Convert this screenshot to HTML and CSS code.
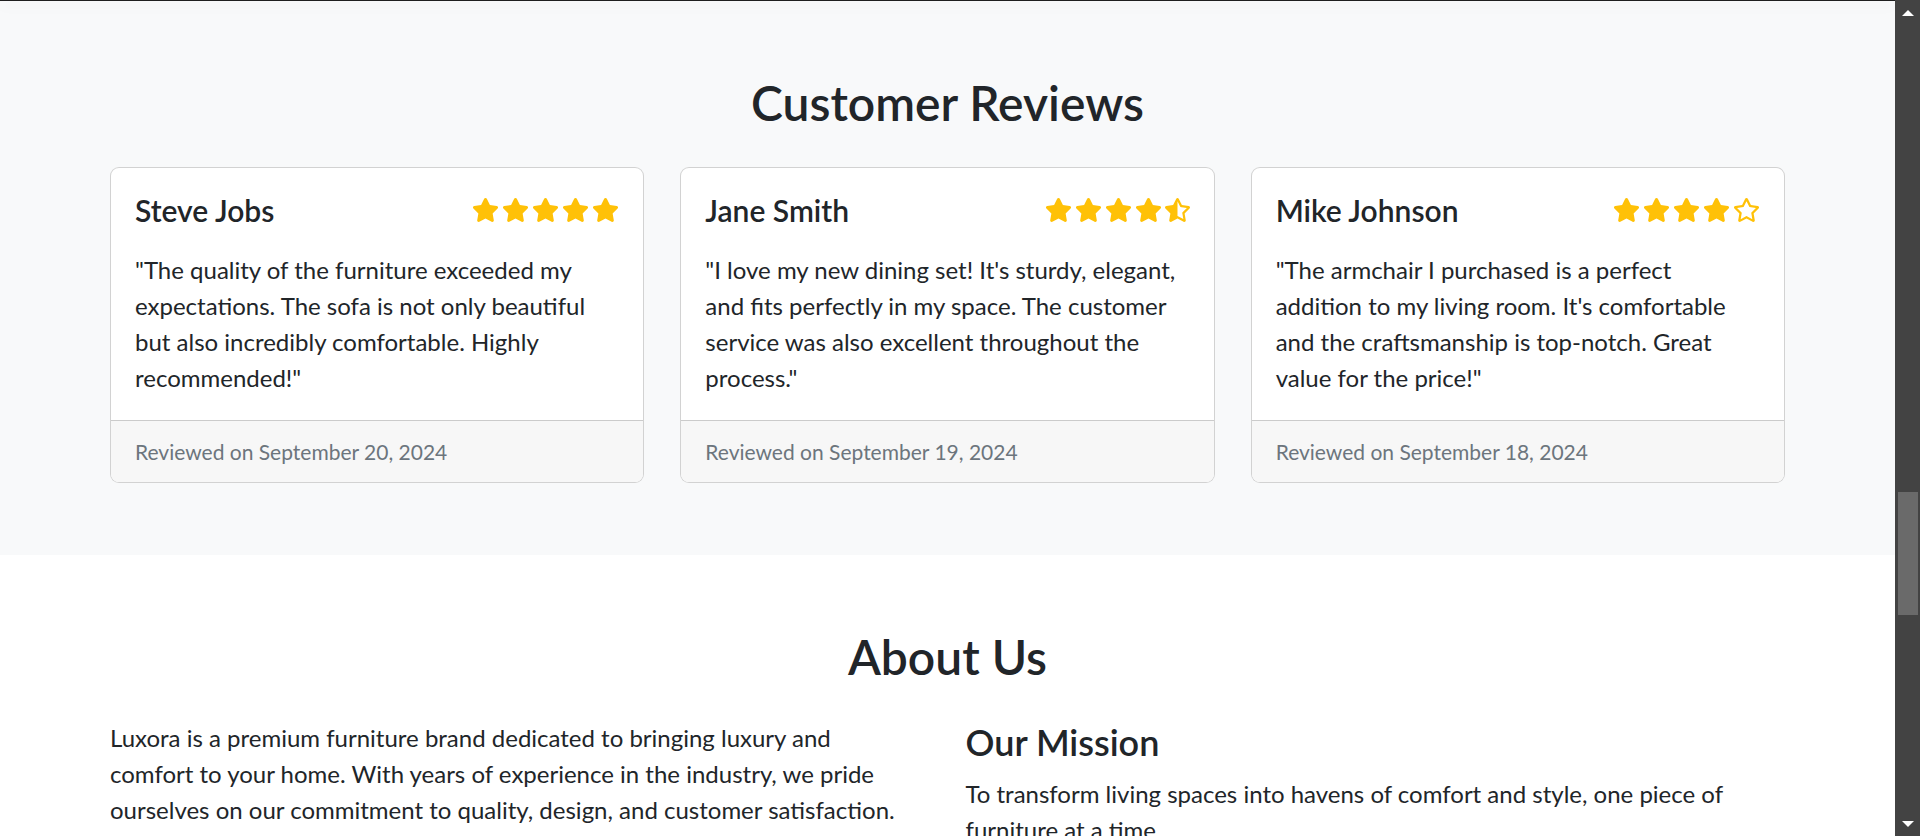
FILE: index.html
```html
<!DOCTYPE html>
<html lang="en">
<head>
<meta charset="utf-8">
<title>Luxora - Reviews</title>
<link rel="stylesheet" href="styles.css">
</head>
<body>
<svg class="defs" xmlns="http://www.w3.org/2000/svg" aria-hidden="true">
  <symbol id="s-full" viewBox="0 0 576 512"><path d="M259.3 17.8L194 150.2 47.9 171.5c-26.2 3.8-36.7 36.1-17.7 54.6l105.7 103-25 145.5c-4.5 26.3 23.2 46 46.4 33.7L288 439.6l130.7 68.7c23.2 12.2 50.9-7.4 46.4-33.7l-25-145.5 105.7-103c19-18.5 8.5-50.8-17.7-54.6L382 150.2 316.7 17.8c-11.7-23.6-45.6-23.9-57.4 0z"/></symbol>
  <symbol id="s-half" viewBox="0 0 536 512"><path d="M508.55 171.51L362.18 150.2 296.77 17.81C290.89 5.98 279.42 0 267.95 0c-11.4 0-22.79 5.9-28.69 17.81l-65.43 132.38-146.38 21.29c-26.25 3.8-36.77 36.09-17.74 54.59l105.89 103-25.06 145.48C86.98 495.33 103.57 512 122.15 512c4.93 0 10-1.17 14.87-3.75l130.95-68.68 130.94 68.7c4.86 2.55 9.92 3.71 14.83 3.71 18.6 0 35.22-16.61 31.66-37.4l-25.03-145.49 105.91-102.98c19.04-18.5 8.52-50.8-17.73-54.6zm-121.74 123.2l-18.12 17.62 4.28 24.88 19.52 113.45-102.13-53.59-22.38-11.74 0.03-317.19 51.03 103.29 11.18 22.63 25.01 3.64 114.23 16.63-82.65 80.38z"/></symbol>
  <symbol id="s-empty" viewBox="0 0 576 512"><path d="M528.1 171.5L382 150.2 316.7 17.8c-11.7-23.6-45.6-23.9-57.4 0L194 150.2 47.9 171.5c-26.2 3.8-36.7 36.1-17.7 54.6l105.7 103-25 145.5c-4.5 26.3 23.2 46 46.4 33.7L288 439.6l130.7 68.7c23.2 12.2 50.9-7.4 46.4-33.7l-25-145.5 105.7-103c19-18.5 8.5-50.8-17.7-54.6zM388.6 312.3l23.7 138.4L288 385.4l-124.3 65.3 23.7-138.4-100.6-98 139-20.2 62.2-126 62.2 126 139 20.2-100.6 98z"/></symbol>
</svg>
<div class="window">
  <div class="viewport">
    <div class="topbar"></div>

    <section class="reviews">
      <div class="container">
        <h2 class="section-title">Customer Reviews</h2>
        <div class="card-grid">
          <div class="card">
            <div class="card-body">
              <div class="card-head">
                <h5 class="reviewer">Steve Jobs</h5>
                <div class="stars">
                  <svg class="star"><use href="#s-full"/></svg>
                  <svg class="star"><use href="#s-full"/></svg>
                  <svg class="star"><use href="#s-full"/></svg>
                  <svg class="star"><use href="#s-full"/></svg>
                  <svg class="star"><use href="#s-full"/></svg>
                </div>
              </div>
              <p class="card-text">"The quality of the furniture exceeded my expectations. The sofa is not only beautiful but also incredibly comfortable. Highly recommended!"</p>
            </div>
            <div class="card-footer"><small class="muted">Reviewed on September 20, 2024</small></div>
          </div>

          <div class="card">
            <div class="card-body">
              <div class="card-head">
                <h5 class="reviewer">Jane Smith</h5>
                <div class="stars">
                  <svg class="star"><use href="#s-full"/></svg>
                  <svg class="star"><use href="#s-full"/></svg>
                  <svg class="star"><use href="#s-full"/></svg>
                  <svg class="star"><use href="#s-full"/></svg>
                  <svg class="star half"><use href="#s-half"/></svg>
                </div>
              </div>
              <p class="card-text">"I love my new dining set! It's sturdy, elegant, and fits perfectly in my space. The customer service was also excellent throughout the process."</p>
            </div>
            <div class="card-footer"><small class="muted">Reviewed on September 19, 2024</small></div>
          </div>

          <div class="card">
            <div class="card-body">
              <div class="card-head">
                <h5 class="reviewer">Mike Johnson</h5>
                <div class="stars">
                  <svg class="star"><use href="#s-full"/></svg>
                  <svg class="star"><use href="#s-full"/></svg>
                  <svg class="star"><use href="#s-full"/></svg>
                  <svg class="star"><use href="#s-full"/></svg>
                  <svg class="star"><use href="#s-empty"/></svg>
                </div>
              </div>
              <p class="card-text">"The armchair I purchased is a perfect addition to my living room. It's comfortable and the craftsmanship is top-notch. Great value for the price!"</p>
            </div>
            <div class="card-footer"><small class="muted">Reviewed on September 18, 2024</small></div>
          </div>
        </div>
      </div>
    </section>

    <section class="about">
      <div class="container">
        <h2 class="section-title about-title">About Us</h2>
        <div class="about-grid">
          <div class="about-col">
            <p class="about-text about-lead">Luxora is a premium furniture brand dedicated to bringing luxury and comfort to your home. With years of experience in the industry, we pride ourselves on our commitment to quality, design, and customer satisfaction.</p>
          </div>
          <div class="about-col">
            <h4 class="mission-title">Our Mission</h4>
            <p class="about-text">To transform living spaces into havens of comfort and style, one piece of furniture at a time.</p>
          </div>
        </div>
      </div>
    </section>
  </div>

  <div class="scrollbar">
    <div class="sb-btn"><span class="arrow-up"></span></div>
    <div class="sb-track"><div class="sb-thumb"></div></div>
    <div class="sb-btn"><span class="arrow-down"></span></div>
  </div>
</div>
</body>
</html>
```
FILE: styles.css
```css
* { box-sizing: border-box; }

body {
  margin: 0;
  font-family: Lato, "Liberation Sans", Arial, sans-serif;
  color: #212529;
  overflow: hidden;
  background: #fff;
}

.defs { display: block; width: 0; height: 0; overflow: hidden; }

.window {
  display: flex;
  height: 836px;
  overflow: hidden;
}

.viewport {
  flex: 1;
  min-width: 0;
  overflow: hidden;
  background: #fff;
}

.topbar {
  height: 1px;
  background: #1e1e1e;
  box-shadow: 0 5px 12px rgba(0, 0, 0, 0.13);
  position: relative;
  z-index: 2;
}

.container {
  max-width: 1711px;
  margin: 0 auto;
  padding: 0 18px;
}

.reviews {
  background: #f8f9fa;
  padding: 73px 0 72px;
}

.section-title {
  font-size: 48px;
  font-weight: 600;
  line-height: 1.2;
  text-align: center;
  margin: 0 0 35px;
  color: #212529;
}

.card-grid {
  display: grid;
  grid-template-columns: repeat(3, 1fr);
  gap: 36px;
}

.card {
  background: #fff;
  border: 1px solid rgba(0, 0, 0, 0.175);
  border-radius: 9px;
  display: flex;
  flex-direction: column;
  overflow: hidden;
}

.card-body {
  flex: 1;
  padding: 24px;
}

.card-head {
  display: flex;
  justify-content: space-between;
  align-items: center;
  height: 36px;
  margin-bottom: 24px;
}

.reviewer {
  margin: 0;
  font-size: 30px;
  font-weight: 600;
  line-height: 36px;
}

.stars {
  display: flex;
  align-items: center;
  gap: 3px;
  color: #ffc107;
}

.star {
  width: 27px;
  height: 24px;
  fill: currentColor;
  display: block;
}

.star.half { width: 25px; }

.card-text {
  margin: 0;
  font-size: 24px;
  line-height: 36px;
}

.card-footer {
  background: #f7f7f7;
  border-top: 1px solid rgba(0, 0, 0, 0.175);
  padding: 12px 24px;
  font-size: 24px;
  line-height: 36px;
}

.muted {
  color: #6c757d;
  font-size: 21px;
}

.about {
  background: #fff;
  padding: 73px 0 72px;
}

.about-title { margin-bottom: 35px; }

.about-grid {
  display: grid;
  grid-template-columns: 1fr 1fr;
  gap: 36px;
}

.about-text {
  margin: 0 0 24px;
  font-size: 24px;
  line-height: 36px;
}

.about-lead { max-width: 804px; }

.mission-title {
  margin: 1px 0 12px;
  font-size: 36px;
  font-weight: 600;
  line-height: 1.2;
}

.scrollbar {
  flex: none;
  width: 25px;
  background: #434343;
  display: flex;
  flex-direction: column;
}

.sb-btn {
  flex: none;
  height: 25px;
  display: flex;
  align-items: center;
  justify-content: center;
}

.sb-track {
  flex: 1;
  padding: 0 2px 0 3px;
}

.sb-thumb {
  margin-top: 467px;
  height: 123px;
  background: #6a6a6a;
}

.arrow-up {
  width: 0;
  height: 0;
  border-left: 6px solid transparent;
  border-right: 6px solid transparent;
  border-bottom: 6px solid #fff;
}

.arrow-down {
  width: 0;
  height: 0;
  border-left: 6px solid transparent;
  border-right: 6px solid transparent;
  border-top: 6px solid #fff;
}
```
